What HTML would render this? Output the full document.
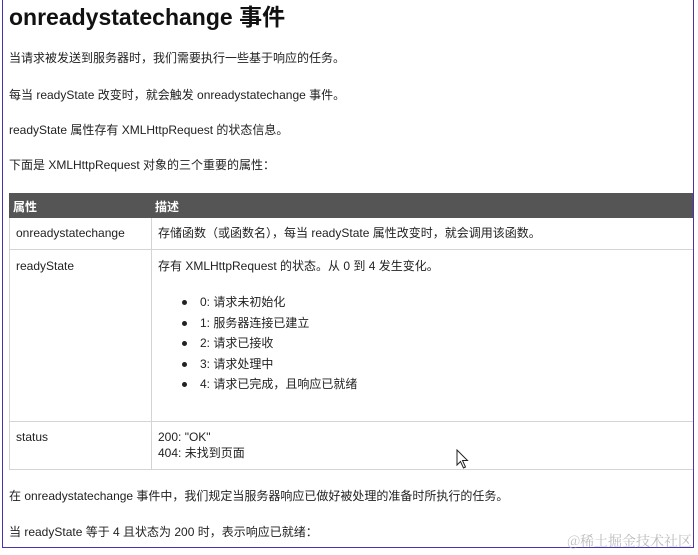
<!DOCTYPE html>
<html><head><meta charset="utf-8"><style>
body{margin:0;width:698px;height:555px;background:#fff;position:relative;overflow:hidden;font-family:"Liberation Sans","Noto Sans CJK SC",sans-serif;color:#222;font-size:12px}
.frame{position:absolute;left:2px;top:-2px;width:690px;height:548px;border:1px solid #4a32b0}
.t{position:absolute;left:9px;white-space:nowrap;line-height:14px}
h1{position:absolute;left:9px;top:3px;margin:0;font-size:23px;font-weight:bold;color:#111;line-height:28px;white-space:nowrap}
.tbl{position:absolute;left:9px;top:193px;width:684px}
.hd{position:absolute;left:0;top:0;width:684px;height:25px;background:#555;color:#fff;font-weight:bold}
.hd span{position:absolute;top:5px}
.row{position:absolute;left:0;width:683px;border-left:1px solid #d4d4d4;border-bottom:1px solid #d4d4d4}
.row .c{position:absolute;left:141px;top:0;bottom:0;border-left:1px solid #d4d4d4}
.row span{position:absolute;white-space:nowrap;line-height:17px}
.dot{position:absolute;width:5px;height:5px;border-radius:50%;background:#222}
.wm{position:absolute;right:6px;top:531px;color:#bbb;font-size:14px;font-family:"Noto Serif CJK SC",serif}
</style></head><body>
<div class="frame"></div>
<h1>onreadystatechange 事件</h1>
<div class="t" style="top:51px">当请求被发送到服务器时，我们需要执行一些基于响应的任务。</div>
<div class="t" style="top:88px">每当 readyState 改变时，就会触发 onreadystatechange 事件。</div>
<div class="t" style="top:123px">readyState 属性存有 XMLHttpRequest 的状态信息。</div>
<div class="t" style="top:158px">下面是 XMLHttpRequest 对象的三个重要的属性：</div>
<div class="tbl">
<div class="hd"><span style="left:4px">属性</span><span style="left:146px">描述</span></div>
<div class="row" style="top:25px;height:31px"><div class="c"></div><span style="left:6px;top:7px">onreadystatechange</span><span style="left:148px;top:7px">存储函数（或函数名），每当 readyState 属性改变时，就会调用该函数。</span></div>
<div class="row" style="top:57px;height:171px"><div class="c"></div><span style="left:6px;top:8px">readyState</span><span style="left:148px;top:8px">存有 XMLHttpRequest 的状态。从 0 到 4 发生变化。</span>
<div class="dot" style="left:172px;top:50px"></div><span style="left:190px;top:44px">0: 请求未初始化</span>
<div class="dot" style="left:172px;top:71px"></div><span style="left:190px;top:65px">1: 服务器连接已建立</span>
<div class="dot" style="left:172px;top:91px"></div><span style="left:190px;top:85px">2: 请求已接收</span>
<div class="dot" style="left:172px;top:112px"></div><span style="left:190px;top:106px">3: 请求处理中</span>
<div class="dot" style="left:172px;top:132px"></div><span style="left:190px;top:126px">4: 请求已完成，且响应已就绪</span>
</div>
<div class="row" style="top:229px;height:47px"><div class="c"></div><span style="left:6px;top:7px">status</span><span style="left:148px;top:7px">200: "OK"</span><span style="left:148px;top:23px">404: 未找到页面</span></div>
</div>
<svg style="position:absolute;left:456px;top:449px" width="14" height="20" viewBox="0 0 14 20"><path d="M1 1 L1 16 L4.5 12.5 L7.5 19 L9.5 18 L6.5 11.5 L11.5 11.5 Z" fill="#fff" stroke="#222" stroke-width="1"/></svg>
<div class="t" style="top:489px">在 onreadystatechange 事件中，我们规定当服务器响应已做好被处理的准备时所执行的任务。</div>
<div class="t" style="top:525px">当 readyState 等于 4 且状态为 200 时，表示响应已就绪：</div>
<div class="wm">@稀土掘金技术社区</div>
</body></html>
